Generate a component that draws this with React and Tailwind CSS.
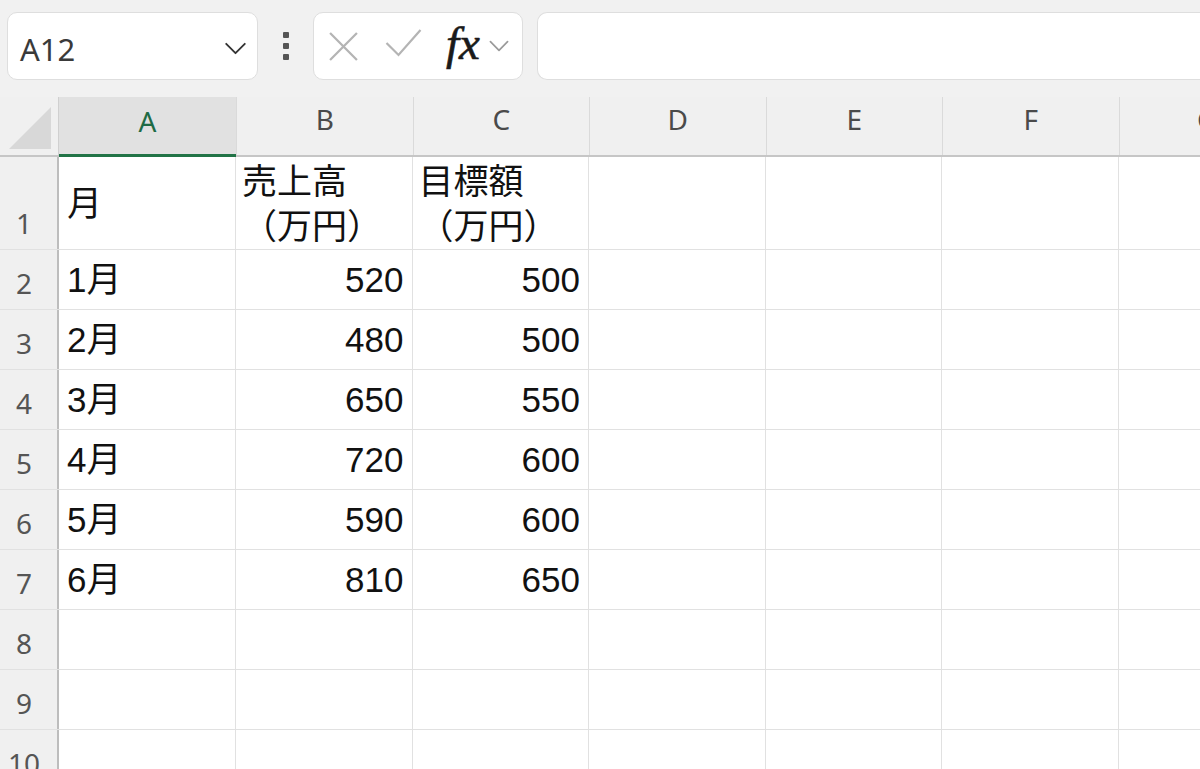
import React from 'react';

const COLS = ['A', 'B', 'C', 'D', 'E', 'F', 'G'];

const ROWS = [
  { n: 1, h: 'h-[93px]', cells: ['月', ['売上高', '（万円）'], ['目標額', '（万円）']] },
  { n: 2, cells: ['1月', '520', '500'] },
  { n: 3, cells: ['2月', '480', '500'] },
  { n: 4, cells: ['3月', '650', '550'] },
  { n: 5, cells: ['4月', '720', '600'] },
  { n: 6, cells: ['5月', '590', '600'] },
  { n: 7, cells: ['6月', '810', '650'] },
  { n: 8, cells: [] },
  { n: 9, cells: [] },
  { n: 10, cells: [] },
];

const uiFont = { fontFamily: '"Noto Sans", "Open Sans", sans-serif' };
const cellFont = { fontFamily: '"Liberation Sans", "Noto Sans CJK JP", sans-serif' };

function Chevron({ className }) {
  return (
    <svg className={className} viewBox="0 0 24 14" fill="none" stroke="currentColor" strokeWidth="2" strokeLinecap="round" strokeLinejoin="round">
      <path d="M2 2l10 10L22 2" />
    </svg>
  );
}

function Toolbar() {
  return (
    <div className="flex items-center h-[97px] bg-[#f1f1f1] pl-[7px] pb-[5px]" style={uiFont}>
      {/* name box */}
      <div className="flex items-center justify-between w-[251px] h-[68px] bg-white border border-[#dedede] rounded-[10px] pl-[12px] pr-[10px]">
        <span className="text-[31px] text-[#3a3a3a] leading-none pt-[7px]">A12</span>
        <Chevron className="w-[23px] h-[13px] text-[#333] mt-[4px]" />
      </div>
      {/* dots */}
      <div className="flex flex-col gap-[5px] w-[55px] items-center">
        <span className="w-[6px] h-[6px] bg-[#555] rounded-[1px]"></span>
        <span className="w-[6px] h-[6px] bg-[#555] rounded-[1px]"></span>
        <span className="w-[6px] h-[6px] bg-[#555] rounded-[1px]"></span>
      </div>
      {/* cancel / enter / fx */}
      <div className="flex items-center w-[210px] h-[68px] bg-white border border-[#dedede] rounded-[10px] pl-[14px]">
        <svg className="w-[31px] h-[31px] text-[#b4b4b4]" viewBox="0 0 30 30" fill="none" stroke="currentColor" strokeWidth="2.2">
          <path d="M2 2l26 26M28 2L2 28" />
        </svg>
        <svg className="w-[37px] h-[28px] ml-[26px] text-[#b4b4b4] -mt-[6px]" viewBox="0 0 36 28" fill="none" stroke="currentColor" strokeWidth="2.2">
          <path d="M1 14l12 12L35 1" />
        </svg>
        <span className="ml-[24px] text-[47px] italic text-[#1a1a1a] leading-none -mt-[6px]" style={{ fontFamily: '"Liberation Serif", serif', WebkitTextStroke: '0.6px #1a1a1a' }}>fx</span>
        <Chevron className="w-[22px] h-[12px] ml-[8px] text-[#9a9a9a]" />
      </div>
      {/* formula input */}
      <div className="flex-1 h-[68px] ml-[14px] bg-white border border-[#dedede] rounded-l-[10px] border-r-0"></div>
    </div>
  );
}

function ColumnHeader() {
  return (
    <div className="flex h-[60px] bg-[#f0f0f0] border-b-2 border-[#c6c6c6]" style={uiFont}>
      <div className="w-[59px] shrink-0 flex items-end justify-end pr-[7px] pb-[6px] border-r border-[#d0d0d0]">
        <svg className="w-[42px] h-[42px]" viewBox="0 0 42 42">
          <path d="M42 0L42 42L0 42Z" fill="#d8d8d8" />
        </svg>
      </div>
      {COLS.map((c, i) => (
        <div
          key={c}
          className={
            i === 0
              ? 'w-[177px] shrink-0 flex items-center justify-center bg-[#e1e1e1] border-b-[3px] border-[#217346] -mb-[2px] text-[28px] text-[#1f6b45] pb-[10px]'
              : 'w-[176.5px] shrink-0 flex items-center justify-center border-l border-[#dadada] text-[28px] text-[#4a4a4a] pb-[14px]'
          }
        >
          {c}
        </div>
      ))}
    </div>
  );
}

function Cell({ value, col }) {
  const isNum = typeof value === 'string' && /^\d+$/.test(value);
  const width = col === 0 ? 'w-[177px]' : 'w-[176.5px]';
  return (
    <div
      className={`${width} shrink-0 border-r border-[#e1e1e1] flex items-center text-[35px] text-[#111] ${
        isNum ? 'justify-end pr-[8px]' : 'justify-start pl-[8px]'
      }`}
      style={cellFont}
    >
      {Array.isArray(value) ? (
        <div className="flex flex-col leading-[45px] -ml-[2px] pt-[2px]">
          {value.map((v) => (
            <span key={v} className="whitespace-nowrap">{v}</span>
          ))}
        </div>
      ) : (
        <span className="leading-none">{value}</span>
      )}
    </div>
  );
}

function Row({ row }) {
  return (
    <div className={`flex ${row.h || 'h-[60px]'} border-b border-[#e1e1e1]`}>
      <div
        className="w-[59px] shrink-0 bg-[#f0f0f0] border-r-2 border-[#bdbdbd] flex items-end pb-[12px] pl-[2px]"
        style={uiFont}
      >
        <span className="w-[44px] text-center text-[28px] leading-none text-[#555]">{row.n}</span>
      </div>
      {COLS.map((c, i) => (
        <Cell key={c} col={i} value={row.cells[i]} />
      ))}
    </div>
  );
}

export default function App() {
  return (
    <div className="w-[1200px] h-[769px] overflow-hidden bg-white">
      <Toolbar />
      <ColumnHeader />
      {ROWS.map((r) => (
        <Row key={r.n} row={r} />
      ))}
    </div>
  );
}
